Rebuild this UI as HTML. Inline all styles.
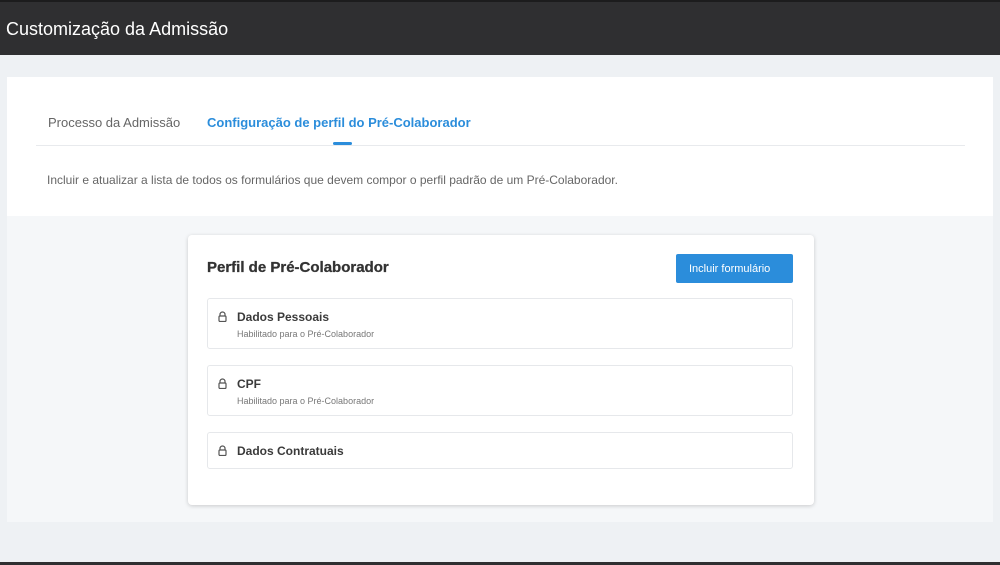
<!DOCTYPE html>
<html><head><style>
*{margin:0;padding:0;box-sizing:border-box}
body{width:1000px;height:565px;background:#eef1f4;font-family:"Liberation Sans",sans-serif;position:relative;overflow:hidden}
.hdr{position:absolute;left:0;top:0;width:1000px;height:55px;background:#2f2f31;border-top:2px solid #1c1c1d}
.hdr span{position:absolute;left:6px;top:17px;color:#fff;font-size:18px}
.top{position:absolute;left:7px;top:77px;width:986px;height:139px;background:#fff}
.low{position:absolute;left:7px;top:216px;width:986px;height:306px;background:#f5f7f9}
.t{position:absolute;font-size:13px}
.card{position:absolute;left:188px;top:235px;width:626px;height:270px;background:#fff;border-radius:4px;box-shadow:0 1px 4px rgba(0,0,0,.18)}
.item{position:absolute;left:19px;width:586px;border:1px solid #e6e8eb;border-radius:3px}
.item b{position:absolute;left:29px;top:11px;font-size:12px;color:#3a3a3a}
.item i{position:absolute;left:29px;top:30px;font-size:9px;color:#777;font-style:normal}
.lock{position:absolute;left:10px;top:12px}
.btm{position:absolute;left:0;top:562px;width:1000px;height:3px;background:#2f2f31}
</style></head><body>
<div class="hdr"><span>Customização da Admissão</span></div>
<div class="top">
<div class="t" style="left:41px;top:38px;color:#666">Processo da Admissão</div>
<div class="t" style="left:200px;top:38px;color:#2b8ddb;font-weight:bold">Configuração de perfil do Pré-Colaborador</div>
<div style="position:absolute;left:326px;top:65px;width:19px;height:3px;background:#2b8ddb;border-radius:2px"></div>
<div style="position:absolute;left:29px;top:68px;width:929px;height:1px;background:#e8eaed"></div>
<div class="t" style="left:40px;top:96px;color:#666;font-size:12px">Incluir e atualizar a lista de todos os formulários que devem compor o perfil padrão de um Pré-Colaborador.</div>
</div>
<div class="low"></div>
<div class="card">
<div style="position:absolute;left:19px;top:24px;font-size:15px;color:#333;font-weight:600;-webkit-text-stroke:0.3px #333">Perfil de Pré-Colaborador</div>
<div style="position:absolute;left:488px;top:19px;width:117px;height:29px;background:#2b8ddb;border-radius:2px;color:#fff;font-size:11px;line-height:30px;padding-left:13px">Incluir formulário</div>
<div class="item" style="top:63px;height:51px"><svg class="lock" width="9" height="11" viewBox="0 0 9 11"><path d="M2 5V3.5a2.5 2.5 0 0 1 5 0V5" fill="none" stroke="#555" stroke-width="1.2"/><rect x="1" y="5" width="7" height="5.5" rx="1" fill="none" stroke="#555" stroke-width="1.2"/></svg><b>Dados Pessoais</b><i>Habilitado para o Pré-Colaborador</i></div>
<div class="item" style="top:130px;height:51px"><svg class="lock" width="9" height="11" viewBox="0 0 9 11"><path d="M2 5V3.5a2.5 2.5 0 0 1 5 0V5" fill="none" stroke="#555" stroke-width="1.2"/><rect x="1" y="5" width="7" height="5.5" rx="1" fill="none" stroke="#555" stroke-width="1.2"/></svg><b>CPF</b><i>Habilitado para o Pré-Colaborador</i></div>
<div class="item" style="top:197px;height:37px"><svg class="lock" width="9" height="11" viewBox="0 0 9 11"><path d="M2 5V3.5a2.5 2.5 0 0 1 5 0V5" fill="none" stroke="#555" stroke-width="1.2"/><rect x="1" y="5" width="7" height="5.5" rx="1" fill="none" stroke="#555" stroke-width="1.2"/></svg><b>Dados Contratuais</b></div>
</div>
<div class="btm"></div>
</body></html>
